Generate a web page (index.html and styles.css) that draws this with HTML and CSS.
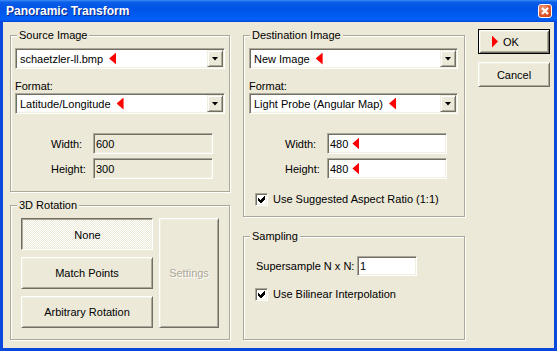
FILE: index.html
```html
<!DOCTYPE html>
<html>
  <head>
    <meta charset="utf-8">
    <title>Panoramic Transform</title>
    <link rel="stylesheet" href="styles.css">
  </head>
  <body>
    <div class="window">
      <div class="titlebar">
        <span class="title">Panoramic Transform</span>
        <span class="close-button">
          <svg width="8" height="8" viewBox="0 0 8 8"><path d="M1 1l6 6M7 1l-6 6" stroke="#fff" stroke-width="2"/></svg>
        </span>
      </div>
      <form class="client">
        <div class="column">
          <fieldset class="group source">
            <legend>Source Image</legend>
            <div class="combo">
              <span class="combo-value">schaetzler-ll.bmp<span class="marker"></span></span>
              <span class="drop-button"></span>
            </div>
            <label class="field-label">Format:</label>
            <div class="combo">
              <span class="combo-value">Latitude/Longitude<span class="marker"></span></span>
              <span class="drop-button"></span>
            </div>
            <div class="size-grid">
              <label>Width:</label><span class="edit readonly">600</span>
              <label>Height:</label><span class="edit readonly">300</span>
            </div>
          </fieldset>
          <fieldset class="group rotation">
            <legend>3D Rotation</legend>
            <div class="rotation-grid">
              <button type="button" class="btn pressed">None</button>
              <button type="button" class="btn">Match Points</button>
              <button type="button" class="btn">Arbitrary Rotation</button>
              <button type="button" class="btn settings" disabled>Settings</button>
            </div>
          </fieldset>
        </div>

        <div class="column">
          <fieldset class="group destination">
            <legend>Destination Image</legend>
            <div class="combo">
              <span class="combo-value">New Image<span class="marker"></span></span>
              <span class="drop-button"></span>
            </div>
            <label class="field-label">Format:</label>
            <div class="combo">
              <span class="combo-value">Light Probe (Angular Map)<span class="marker"></span></span>
              <span class="drop-button"></span>
            </div>
            <div class="size-grid">
              <label>Width:</label><span class="edit">480<span class="marker"></span></span>
              <label>Height:</label><span class="edit">480<span class="marker"></span></span>
            </div>
            <div class="check-row">
              <span class="checkbox">
                <svg width="7" height="7" viewBox="0 0 7 7" shape-rendering="crispEdges"><polygon points="0,2 2,4 6,0 7,0 7,3 3,7 2,7 0,5" fill="#000"/></svg>
              </span>
              <span>Use Suggested Aspect Ratio (1:1)</span>
            </div>
          </fieldset>
          <fieldset class="group sampling">
            <legend>Sampling</legend>
            <div class="supersample">
              <label>Supersample N x N:</label><span class="edit">1</span>
            </div>
            <div class="check-row">
              <span class="checkbox">
                <svg width="7" height="7" viewBox="0 0 7 7" shape-rendering="crispEdges"><polygon points="0,2 2,4 6,0 7,0 7,3 3,7 2,7 0,5" fill="#000"/></svg>
              </span>
              <span>Use Bilinear Interpolation</span>
            </div>
          </fieldset>
        </div>

        <div class="actions">
          <button type="submit" class="btn default"><span class="marker right"></span>OK</button>
          <button type="button" class="btn">Cancel</button>
        </div>
      </form>
    </div>
  </body>
</html>
```

FILE: styles.css
```css
:root {
  --face: #ece9d8;
  --shadow: #aca899;
  --dark: #716f64;
  --light: #f1efe2;
  --white: #fff;
  --marker: #ff0000;
  --frame: #0a48dc;
  --disabled: #aca899;
}

* {
  box-sizing: border-box;
}

body {
  margin: 0;
  font-family: "Liberation Sans", Arial, sans-serif;
  font-size: 11px;
  color: #000;
}

.window {
  display: flex;
  flex-direction: column;
  width: 557px;
  height: 351px;
  background: var(--face);
}

/* title bar */

.titlebar {
  display: flex;
  align-items: center;
  justify-content: space-between;
  height: 22px;
  padding: 0 5px 0 6px;
  background: linear-gradient(180deg, #3a8cf6 0%, #0a5ee8 10%, #0053e6 40%, #0060f8 85%, #0058ef 92%, #0046d6 100%);
}

.title {
  color: var(--white);
  font-weight: bold;
  font-size: 12px;
  text-shadow: 1px 1px 0 #0a2a8a;
}

.close-button {
  display: flex;
  align-items: center;
  justify-content: center;
  width: 14px;
  height: 14px;
  border: 1px solid var(--white);
  border-radius: 3px;
  background: radial-gradient(circle at 35% 30%, #f0a080, #e0582e 55%, #c23a10);
}

/* client area */

.client {
  flex: 1;
  display: grid;
  grid-template-columns: 220px 222px 72px;
  column-gap: 13px;
  align-items: start;
  padding: 7px 0 0 7px;
  border: 3px solid var(--frame);
  border-top: 0;
}

.column {
  display: flex;
  flex-direction: column;
  gap: 7px;
  align-self: stretch;
}

.column + .column {
  gap: 13px;
  padding-bottom: 8px;
}

/* group boxes */

.group {
  --pad: 4px;
  margin: 0;
  min-width: 0;
  padding: 0 var(--pad) 12px;
  border: 1px solid var(--shadow);
  box-shadow: inset 1px 1px 0 var(--white), 1px 1px 0 var(--white);
}

.group legend {
  margin-left: calc(6px - var(--pad));
  padding: 0 2px;
  line-height: 13px;
  background: var(--face);
}

.group.destination {
  --pad: 5px;
  padding-right: 6px;
  padding-bottom: 10px;
}

.group.rotation {
  --pad: 10px;
  padding-bottom: 11px;
}

.group.sampling {
  --pad: 11px;
  flex: 1;
}

.field-label {
  display: block;
  margin-top: 11px;
  line-height: 13px;
}

/* combo boxes and edits */

.combo {
  display: flex;
  height: 21px;
  margin-top: 6px;
  padding: 1px;
  background: var(--white);
  border: 1px solid;
  border-color: var(--shadow) var(--white) var(--white) var(--shadow);
  box-shadow: inset 1px 1px 0 var(--dark), inset -1px -1px 0 var(--light);
}

.field-label + .combo {
  margin-top: 0;
}

.combo-value {
  flex: 1;
  display: flex;
  align-items: center;
  padding-left: 3px;
}

.drop-button {
  display: flex;
  align-items: center;
  justify-content: center;
  width: 16px;
  background: var(--face);
  border: 1px solid;
  border-color: var(--light) var(--dark) var(--dark) var(--light);
  box-shadow: inset 1px 1px 0 var(--white), inset -1px -1px 0 var(--shadow);
}

.drop-button::after {
  content: "";
  width: 7px;
  height: 4px;
  background: #000;
  clip-path: polygon(0 0, 100% 0, 50% 100%);
}

.marker {
  display: inline-block;
  width: 7px;
  height: 12px;
  margin-left: 6px;
  background: var(--marker);
  clip-path: polygon(100% 0, 100% 100%, 0 50%);
}

.marker.right {
  width: 6px;
  margin: 0 5px 0 0;
  clip-path: polygon(0 0, 100% 50%, 0 100%);
}

.edit {
  display: flex;
  align-items: center;
  height: 21px;
  padding: 1px 2px;
  background: var(--white);
  border: 1px solid;
  border-color: var(--shadow) var(--white) var(--white) var(--shadow);
  box-shadow: inset 1px 1px 0 var(--dark), inset -1px -1px 0 var(--light);
}

.edit .marker {
  margin-left: 4px;
}

.edit.readonly {
  background: var(--face);
}

.size-grid {
  display: grid;
  grid-template-columns: 42px 120px;
  row-gap: 4px;
  align-items: center;
  margin: 19px 0 0 36px;
}

.supersample {
  display: grid;
  grid-template-columns: 101px 60px;
  align-items: center;
  margin: 13px 0 0 1px;
}

.supersample .edit {
  height: 20px;
}

.check-row {
  display: flex;
  align-items: center;
  gap: 5px;
  margin: 14px 0 0 6px;
  line-height: 13px;
}

.sampling .check-row {
  margin: 12px 0 0 0;
}

.checkbox {
  display: flex;
  align-items: center;
  justify-content: center;
  width: 13px;
  height: 13px;
  background: var(--white);
  border: 1px solid;
  border-color: var(--shadow) var(--white) var(--white) var(--shadow);
  box-shadow: inset 1px 1px 0 var(--dark), inset -1px -1px 0 var(--light);
}

/* buttons */

.btn {
  display: flex;
  align-items: center;
  justify-content: center;
  padding: 0;
  font: inherit;
  color: #000;
  background: var(--face);
  border: 1px solid;
  border-color: var(--white) var(--dark) var(--dark) var(--white);
  box-shadow: inset 1px 1px 0 var(--light), inset -1px -1px 0 var(--shadow);
}

.btn.pressed {
  padding: 1px 0 0 1px;
  border-color: var(--dark) var(--white) var(--white) var(--dark);
  box-shadow: inset 1px 1px 0 var(--shadow), inset -1px -1px 0 var(--light);
  background: repeating-conic-gradient(var(--white) 0 25%, var(--face) 0 50%) 0 0 / 2px 2px;
}

.btn:disabled {
  color: var(--disabled);
  text-shadow: 1px 1px 0 var(--white);
}

.rotation-grid {
  display: grid;
  grid-template-columns: 132px 60px;
  grid-template-rows: repeat(3, 32px);
  grid-auto-flow: column;
  gap: 7px 6px;
  margin-top: 6px;
}

.rotation-grid .settings {
  grid-row: span 3;
}

.actions {
  display: flex;
  flex-direction: column;
  gap: 8px;
}

.actions .btn {
  height: 25px;
}

.btn.default {
  justify-content: flex-start;
  padding-left: 13px;
  border-color: #000;
  box-shadow: inset 1px 1px 0 var(--white), inset -1px -1px 0 var(--dark), inset 2px 2px 0 var(--light), inset -2px -2px 0 var(--shadow);
}
```
